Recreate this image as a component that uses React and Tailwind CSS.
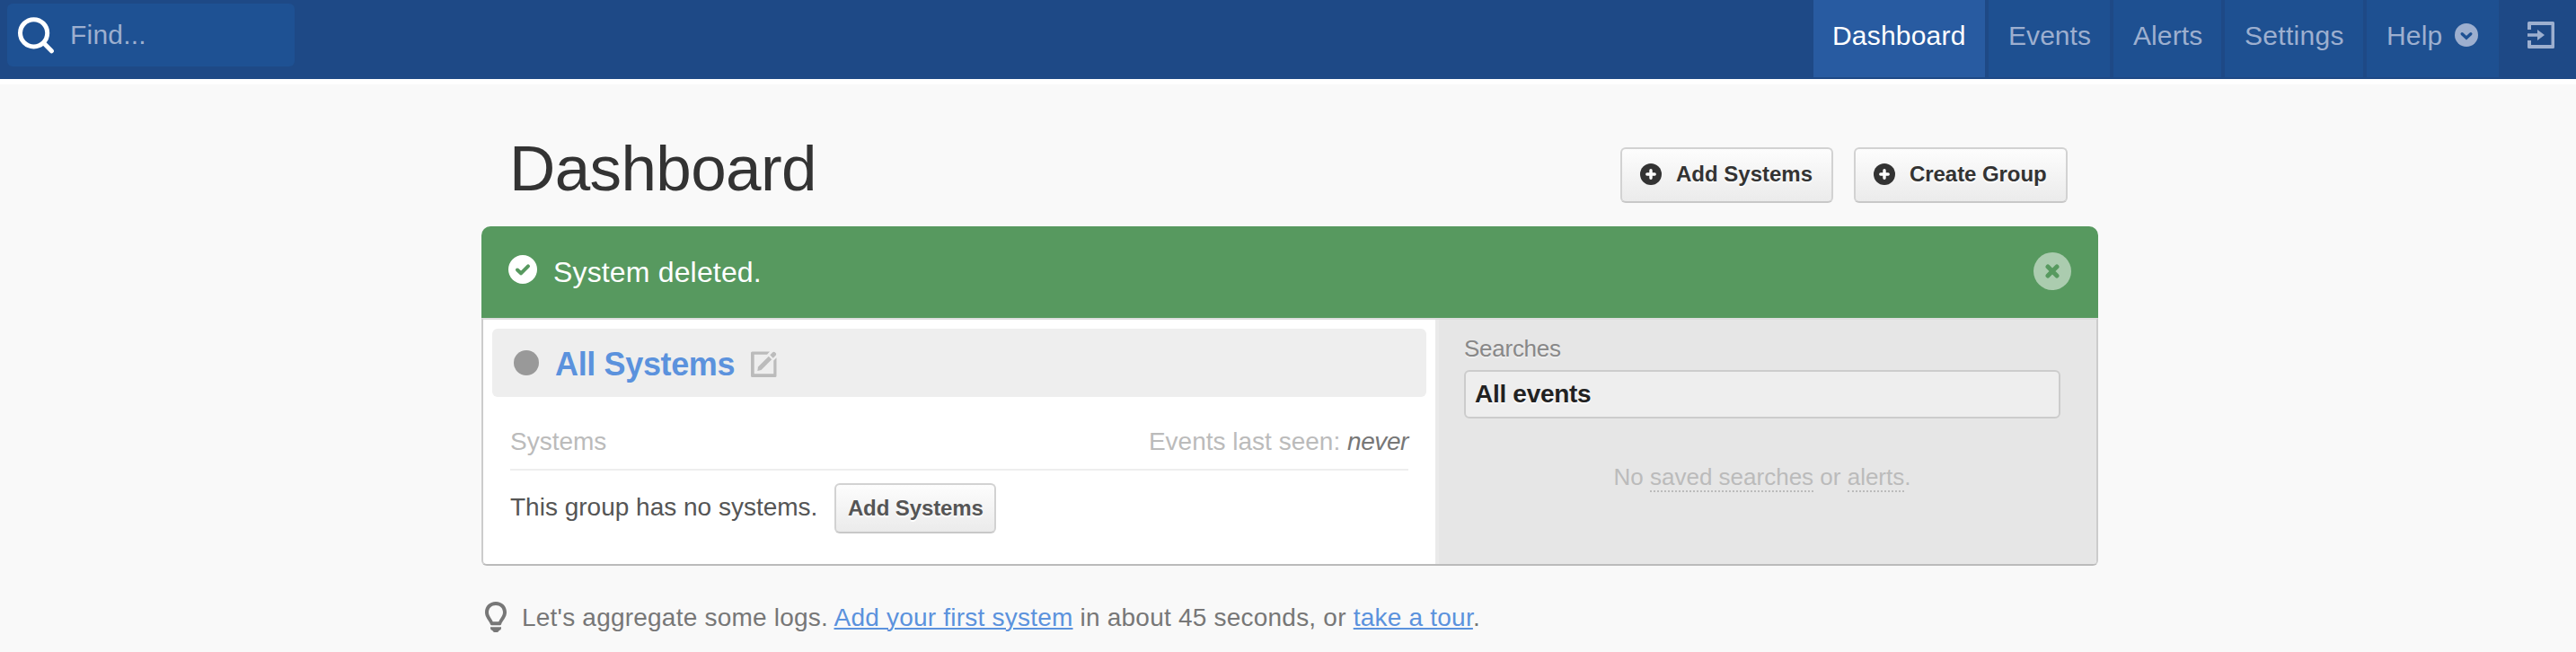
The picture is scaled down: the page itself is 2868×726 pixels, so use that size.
const Search = () => (
  <svg width="40" height="41" viewBox="0 0 40 41" fill="none" stroke="#fff" strokeLinecap="round">
    <circle cx="17.6" cy="17.8" r="15.1" strokeWidth="5" />
    <path d="M28.5 28.8 37.4 37.8" strokeWidth="5" />
  </svg>
);

const Chevron = () => (
  <svg width="26" height="26" viewBox="0 0 26 26" fill="none">
    <circle cx="13" cy="13" r="13" fill="#9dafcf" />
    <path d="M8.200 11.700 13 16.200 17.800 11.700" stroke="#1e5193" strokeWidth="3.400" strokeLinecap="round" />
  </svg>
);

const Logout = () => (
  <svg width="30" height="30" viewBox="0 0 30 30" fill="#9dafcf">
    <path d="M1.500 0H28.500Q30 0 30 1.500V28.500Q30 30 28.500 30H1.500Q0 30 0 28.500V21H4V26H26.500V4H4V9H0V1.500Q0 0 1.500 0Z" />
    <path d="M0 13.200H11V9L19 15 11 21V16.800H0Z" />
  </svg>
);

const Plus = () => (
  <svg width="24" height="24" viewBox="0 0 24 24" fill="none">
    <circle cx="12" cy="12" r="12" fill="#333" />
    <path d="M12 7.800V16.200M7.800 12H16.200" stroke="#fff" strokeWidth="3.400" strokeLinecap="round" />
  </svg>
);

const Check = () => (
  <svg width="32" height="32" viewBox="0 0 32 32" fill="none">
    <circle cx="16" cy="16" r="16" fill="#fff" />
    <path d="M10 16.500 14 20.300 22 12.300" stroke="#57995f" strokeWidth="4" strokeLinecap="round" strokeLinejoin="round" />
  </svg>
);

const Close = () => (
  <svg width="42" height="42" viewBox="0 0 42 42" fill="none">
    <circle cx="21" cy="21" r="21" fill="#abccaf" />
    <path d="M16 16 26 26M26 16 16 26" stroke="#57995f" strokeWidth="5" strokeLinecap="round" />
  </svg>
);

const Edit = () => (
  <svg width="29" height="29" viewBox="0 0 29 29" fill="#bbb">
    <path d="M1.500 .5H21L18 3.700H3.700V25.300H25.300V10.500L28.500 7.300V27.500Q28.500 29 27 29H1.500Q0 29 0 27.500V2Q0 .5 1.500 .5Z" />
    <path d="M8 17.500 19.800 5.800 23.200 9.200 11.500 21 7.300 22Z" />
    <path d="M21.300 4.300 24.300 1.300Q25.500 .2 26.800 1.300L27.700 2.200Q28.800 3.500 27.700 4.700L24.700 7.700Z" />
  </svg>
);

const Bulb = () => (
  <svg width="24" height="34" viewBox="0 0 24 34" fill="#777">
    <path fillRule="evenodd" d="M12 0C5 0 0 5 0 11.700C0 17.500 4.300 20.500 6 25.200Q6.300 26.300 7.500 26.300H16.500Q17.700 26.300 18 25.200C19.700 20.500 24 17.500 24 11.700C24 5 19 0 12 0ZM12 4C16.700 4 20 7.300 20 11.800C20 16 17 18.300 15.300 22.300H8.700C7 18.300 4 16 4 11.800C4 7.300 7.300 4 12 4Z" />
    <path d="M6 28.200H18V29.500Q18 31.500 15.800 32Q14.800 34 13.500 34H10.500Q9.200 34 8.200 32Q6 31.500 6 29.500Z" />
  </svg>
);

const tabs = [
  { label: 'Dashboard', cls: 'w-[191px] bg-[#285ba1] text-white tracking-[0.2px] pl-[21px]' },
  { label: 'Events', cls: 'w-[135px] bg-[#1e5091] tracking-[0.06px] pl-[22px]' },
  { label: 'Alerts', cls: 'w-[120px] bg-[#1e5091] tracking-[0.1px] pl-[22px]' },
  { label: 'Settings', cls: 'w-[154px] bg-[#1e5091] tracking-[0.3px] pl-[22px]' },
];

const button = 'flex items-center rounded-md border-2 border-[#d2d2d2] border-b-[#c8c8c8] bg-linear-to-b from-[#fdfdfd] to-[#ebebeb] text-[24px] font-bold [text-shadow:0_2px_0_#fff]';

export default function App() {
  return (
    <div className="h-[726px] w-[2868px] overflow-hidden bg-[#f9f9f9] font-['Liberation_Sans',Arial,sans-serif]">
      <header className="flex h-[88px] items-start bg-[#1e4986] pl-2 text-[30px] text-[#9dafcf]">
        <div className="mt-1 flex h-[70px] w-80 items-center rounded-md bg-[#1e5193] pl-3">
          <Search />
          <span className="mb-px ml-[18px] tracking-[0.2px]">Find...</span>
        </div>
        <nav className="ml-auto flex h-[86px] gap-1">
          {tabs.map((t) => (
            <a key={t.label} className={`flex items-center pb-[7px] ${t.cls}`}>{t.label}</a>
          ))}
          <a className="flex w-[147px] items-center bg-[#1e5091] pb-[7px] pl-[22px] tracking-[0.2px]">
            Help
            <span className="mb-px ml-[13px]"><Chevron /></span>
          </a>
        </nav>
        <a className="mr-6 ml-8 mt-6"><Logout /></a>
      </header>
      <div className="h-1.5 bg-white" />

      <main className="ml-[536px] w-[1800px]">
        <div className="flex h-[158px] items-start pr-[34px] pl-[31px] text-[#333]">
          <h1 className="mt-[58px] text-[71px] leading-[71px] tracking-[-0.6px]">Dashboard</h1>
          <button className={`mt-[70px] ml-auto h-[62px] w-[237px] pb-[3px] pl-5 ${button}`}>
            <Plus /><span className="ml-4">Add Systems</span>
          </button>
          <button className={`mt-[70px] ml-[23px] h-[62px] w-[238px] pb-[3px] pl-5 ${button}`}>
            <Plus /><span className="ml-4 tracking-[-0.06px]">Create Group</span>
          </button>
        </div>

        <div className="flex h-[102px] items-center rounded-t-[10px] bg-[#57995f] pr-[30px] pl-[30px] text-[32px] text-white">
          <span className="mb-1.5"><Check /></span>
          <span className="ml-[18px] tracking-[0.16px]">System deleted.</span>
          <span className="mb-[3px] ml-auto"><Close /></span>
        </div>

        <div className="flex h-[276px] overflow-hidden rounded-b-md border-2 border-[#ccc] border-t-[#ddd] border-b-[#bbb] bg-white">
          <section className="w-[1060px] p-2.5 text-[28px]">
            <div className="flex h-[76px] items-center rounded-md bg-[#eee] pl-6">
              <span className="size-7 rounded-full bg-[#999]" />
              <span className="mt-[3px] ml-[18px] text-[36px] font-bold tracking-[-0.36px] text-[#5b92dd]">All Systems</span>
              <span className="mt-[3px] ml-[18px]"><Edit /></span>
            </div>
            <div className="mx-5 mt-[30px] flex h-[52px] justify-between border-b-2 border-[#eee] leading-[40px] text-[#bbb]">
              <span>Systems</span>
              <span>Events last seen: <em className="tracking-[-0.4px] text-[#777]">never</em></span>
            </div>
            <div className="mx-5 mt-3.5 flex items-center text-[#555]">
              <span className="mb-[3px]">This group has no systems.</span>
              <button className={`ml-[19px] h-14 w-[180px] justify-center tracking-[-0.1px] ${button}`}>Add Systems</button>
            </div>
          </section>
          <aside className="w-[736px] border-l-4 border-[#eaeaea] bg-[#e6e6e6] pt-[17px] pr-10 pl-7">
            <div className="text-[26px] leading-[30px] tracking-[-0.26px] text-[#888] [text-shadow:0_2px_0_#eee]">Searches</div>
            <div className="mt-[9px] flex h-[54px] items-center rounded-md border-2 border-[#ccc] bg-[#eee] pb-px pl-2.5 text-[28px] font-bold tracking-[-0.3px] text-[#222] [text-shadow:0_2px_0_#fff]">All events</div>
            <p className="mt-[50px] text-center text-[26px] leading-[30px] text-[#bbb]">
              No <a className="border-b-2 border-dotted border-[#bbb]">saved searches</a> or <a className="border-b-2 border-dotted border-[#bbb]">alerts</a>.
            </p>
          </aside>
        </div>

        <div className="mt-[38px] flex pl-1 text-[28px] leading-[40px] tracking-[0.22px] text-[#777]">
          <span className="mt-0.5"><Bulb /></span>
          <p className="ml-[17px]">
            Let's aggregate some logs. <a className="text-[#5b92dd] underline decoration-2 underline-offset-2">Add your first system</a> in about 45 seconds, or <a className="text-[#5b92dd] underline decoration-2 underline-offset-2">take a tour</a>.
          </p>
        </div>
      </main>
    </div>
  );
}
